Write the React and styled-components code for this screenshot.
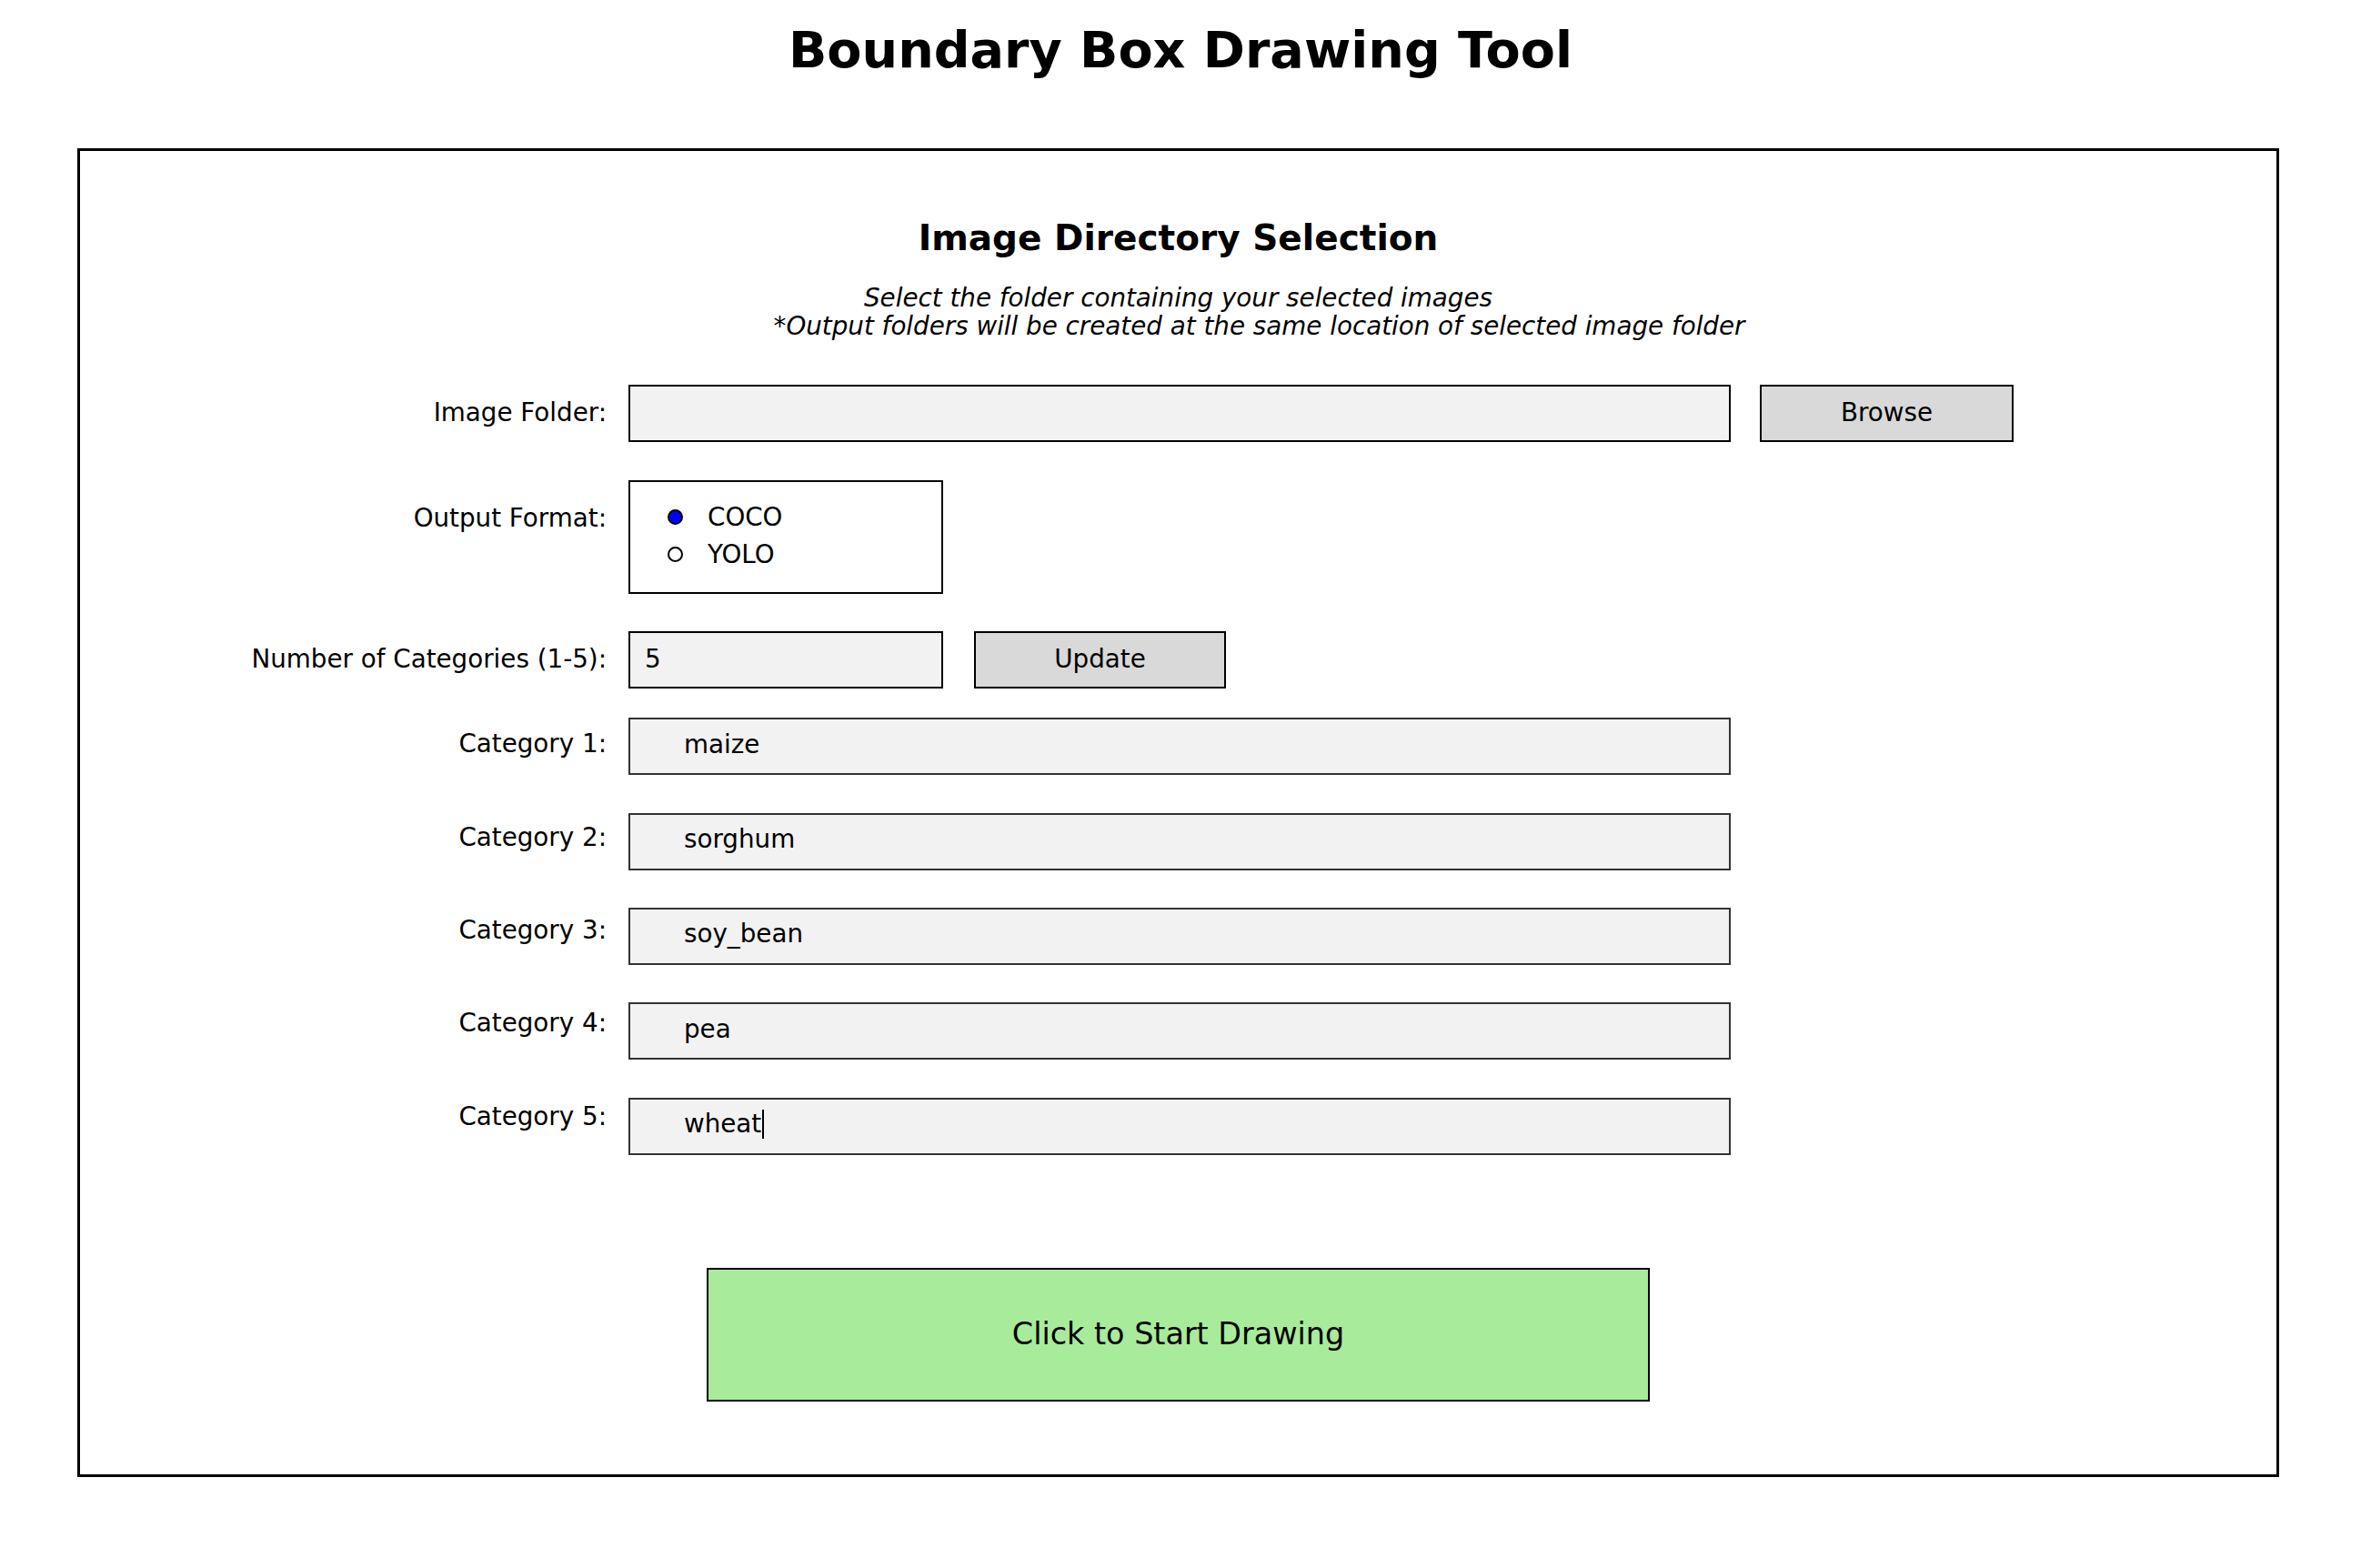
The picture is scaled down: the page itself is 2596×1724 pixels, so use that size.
import React from 'react';
import styled, { createGlobalStyle } from 'styled-components';

const GlobalStyle = createGlobalStyle`
  html, body {
    margin: 0;
    padding: 0;
    background: #fff;
  }
  body {
    font-family: "DejaVu Sans", "Liberation Sans", sans-serif;
    color: #000;
  }
  * {
    box-sizing: border-box;
  }
`;

const Page = styled.div`
  width: 2596px;
  height: 1724px;
  display: flex;
  flex-direction: column;
`;

const Title = styled.h1`
  margin: 0;
  height: 110px;
  line-height: 110px;
  text-align: center;
  font-size: 55.6px;
  font-weight: bold;
`;

const Frame = styled.div`
  margin: 53px 0 0 85px;
  width: 2421px;
  height: 1461px;
  border: 3px solid #000;
  display: flex;
  flex-direction: column;
  padding-top: 73px;
`;

const SectionTitle = styled.h2`
  margin: 0;
  font-size: 39px;
  line-height: 46px;
  font-weight: bold;
  text-align: center;
`;

const Notes = styled.div`
  margin-top: 27px;
`;

const NoteLine = styled.div`
  font-size: 27.75px;
  line-height: 31px;
  font-style: italic;
  text-align: center;
  padding-left: ${(p) => p.$shift || 0}px;
`;

const Row = styled.div`
  display: grid;
  grid-template-columns: 579px auto;
  column-gap: 24px;
  align-items: center;
  margin-top: ${(p) => p.$gap}px;
`;

const Label = styled.div`
  font-size: 27.75px;
  line-height: 32px;
  text-align: right;
  white-space: nowrap;
  align-self: ${(p) => (p.$top ? 'start' : 'center')};
  margin-top: ${(p) => (p.$top ? 26 : 0)}px;
  margin-bottom: ${(p) => (p.$lift || 0) * 2}px;
`;

const Controls = styled.div`
  display: flex;
  align-items: center;
  gap: ${(p) => p.$gap || 32}px;
`;

const TextBox = styled.div`
  width: ${(p) => p.$width}px;
  height: 63px;
  border: 2px solid ${(p) => p.$edge || '#000'};
  background: #f2f2f2;
  padding: 0 0 ${(p) => p.$raise || 3}px ${(p) => p.$indent}px;
  display: flex;
  align-items: center;
  font-size: 27.75px;
  white-space: pre;
`;

const Caret = styled.span`
  display: inline-block;
  width: 2px;
  height: 32px;
  background: #000;
  margin-left: 1px;
`;

const Button = styled.div`
  width: ${(p) => p.$width}px;
  height: 63px;
  border: 2px solid #000;
  background: #d9d9d9;
  display: flex;
  align-items: center;
  justify-content: center;
  padding-bottom: 3px;
  font-size: 27.75px;
  cursor: pointer;
`;

const RadioBox = styled.div`
  width: 346px;
  height: 125px;
  border: 2px solid #000;
  background: #fff;
  padding: 18px 0 0 41px;
`;

const RadioOption = styled.div`
  height: 41px;
  display: flex;
  align-items: center;
  gap: 27px;
  font-size: 27.75px;
`;

const Dot = styled.span`
  width: 17px;
  height: 17px;
  border-radius: 50%;
  border: 2px solid #000;
  background: ${(p) => (p.$on ? '#0000ff' : '#fff')};
`;

const StartButton = styled.div`
  margin: 124px auto 0;
  width: 1037px;
  height: 147px;
  border: 2px solid #000;
  background: #a8eb9b;
  display: flex;
  align-items: center;
  justify-content: center;
  padding-bottom: 3px;
  font-size: 33.4px;
  cursor: pointer;
`;

const categories = [
  { name: 'maize', gap: 32, lift: 3, raise: 5 },
  { name: 'sorghum', gap: 42, lift: 5, raise: 6 },
  { name: 'soy_bean', gap: 41, lift: 7, raise: 6 },
  { name: 'pea', gap: 41, lift: 9, raise: 4 },
  { name: 'wheat', gap: 42, lift: 11, raise: 6, caret: true },
];

export default function App() {
  return (
    <Page>
      <GlobalStyle />
      <Title>Boundary Box Drawing Tool</Title>
      <Frame>
        <SectionTitle>Image Directory Selection</SectionTitle>
        <Notes>
          <NoteLine>Select the folder containing your selected images</NoteLine>
          <NoteLine $shift={178}>
            *Output folders will be created at the same location of selected image folder
          </NoteLine>
        </Notes>

        <Row $gap={49}>
          <Label $lift={1}>Image Folder:</Label>
          <Controls $gap={32}>
            <TextBox $width={1212} $indent={18} />
            <Button $width={279}>Browse</Button>
          </Controls>
        </Row>

        <Row $gap={42}>
          <Label $top>Output Format:</Label>
          <Controls>
            <RadioBox>
              <RadioOption>
                <Dot $on />
                COCO
              </RadioOption>
              <RadioOption>
                <Dot />
                YOLO
              </RadioOption>
            </RadioBox>
          </Controls>
        </Row>

        <Row $gap={41}>
          <Label $lift={1}>Number of Categories (1-5):</Label>
          <Controls $gap={34}>
            <TextBox $width={346} $indent={16}>5</TextBox>
            <Button $width={277}>Update</Button>
          </Controls>
        </Row>

        {categories.map((c, i) => (
          <Row key={c.name} $gap={c.gap}>
            <Label $lift={c.lift}>Category {i + 1}:</Label>
            <Controls>
              <TextBox $width={1212} $indent={59} $edge="#333" $raise={c.raise}>
                {c.name}
                {c.caret && <Caret />}
              </TextBox>
            </Controls>
          </Row>
        ))}

        <StartButton>Click to Start Drawing</StartButton>
      </Frame>
    </Page>
  );
}
